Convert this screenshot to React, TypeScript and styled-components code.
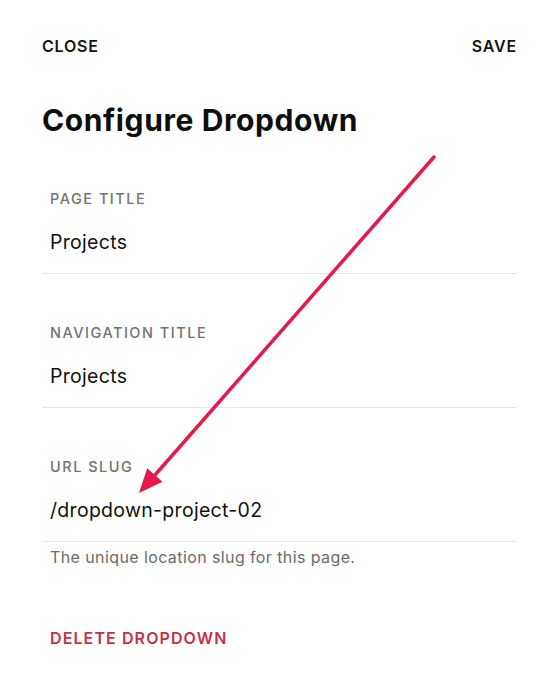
import styled, { createGlobalStyle } from "styled-components";

const GlobalStyle = createGlobalStyle`
  html, body {
    margin: 0;
    padding: 0;
    background: #fff;
  }
  body {
    font-family: Inter, "Noto Sans", "Liberation Sans", sans-serif;
    color: #111;
    -webkit-font-smoothing: antialiased;
  }
`;

const Page = styled.div`
  position: relative;
  width: 549px;
  height: 700px;
  box-sizing: border-box;
  padding: 36px 32px 0 42px;
  overflow: hidden;
`;

const Header = styled.div`
  display: flex;
  justify-content: space-between;
  align-items: center;
`;

const HeaderButton = styled.button`
  background: none;
  border: 0;
  padding: 0;
  font-family: inherit;
  font-size: 16px;
  line-height: 20px;
  font-weight: 600;
  letter-spacing: 0.8px;
  color: #151515;
  cursor: pointer;
`;

const Title = styled.h1`
  margin: 50px 0 0;
  font-size: 30px;
  line-height: 29px;
  font-weight: 700;
  letter-spacing: 0.6px;
  color: #0e0e0e;
`;

const Field = styled.div`
  padding: 49px 8px 17px;
  border-bottom: 1px solid #e6e6e6;

  &:first-child {
    padding-top: 54px;
  }
`;

const FieldLabel = styled.div`
  font-size: 14.5px;
  line-height: 20px;
  font-weight: 500;
  letter-spacing: 1.5px;
  color: #737373;
  text-transform: uppercase;
`;

const FieldValue = styled.div`
  margin-top: 19px;
  font-size: 19.5px;
  line-height: 28px;
  font-weight: 400;
  letter-spacing: 0.3px;
  color: #111;
`;

const Helper = styled.p`
  margin: 5px 0 0;
  padding: 0 8px;
  font-size: 16px;
  line-height: 20px;
  letter-spacing: 0.4px;
  color: #6b6b6b;
`;

const DeleteButton = styled.button`
  display: block;
  margin: 61px 0 0 8px;
  background: none;
  border: 0;
  padding: 0;
  font-family: inherit;
  font-size: 16px;
  line-height: 20px;
  font-weight: 600;
  letter-spacing: 1.1px;
  color: #c3304a;
  cursor: pointer;
`;

const ArrowLayer = styled.svg`
  position: absolute;
  top: 0;
  left: 0;
  pointer-events: none;
`;

const fields = [
  { label: "Page Title", value: "Projects" },
  { label: "Navigation Title", value: "Projects" },
  { label: "URL Slug", value: "/dropdown-project-02" },
];

export default function App() {
  return (
    <>
      <GlobalStyle />
      <Page>
        <Header>
          <HeaderButton>CLOSE</HeaderButton>
          <HeaderButton>SAVE</HeaderButton>
        </Header>
        <Title>Configure Dropdown</Title>
        <div>
          {fields.map((f) => (
            <Field key={f.label}>
              <FieldLabel>{f.label}</FieldLabel>
              <FieldValue>{f.value}</FieldValue>
            </Field>
          ))}
        </div>
        <Helper>The unique location slug for this page.</Helper>
        <DeleteButton>DELETE DROPDOWN</DeleteButton>

        <ArrowLayer width="549" height="700" viewBox="0 0 549 700">
          <line
            x1="434"
            y1="157"
            x2="155"
            y2="475"
            stroke="#e6194b"
            strokeWidth="3.5"
            strokeLinecap="round"
          />
          <polygon points="139,493 162.5,481.8 147.2,468.3" fill="#e6194b" />
        </ArrowLayer>
      </Page>
    </>
  );
}
